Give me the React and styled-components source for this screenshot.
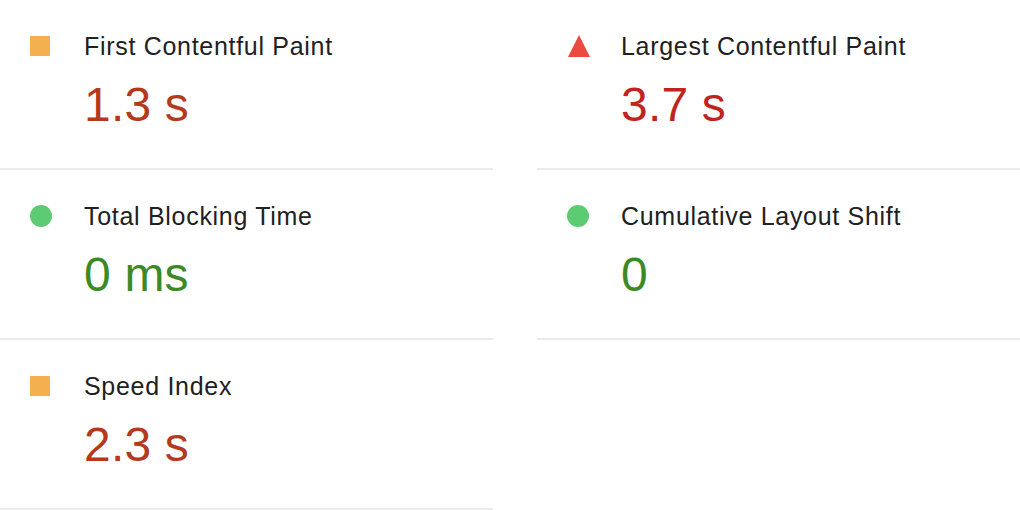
import React from 'react';
import styled, { createGlobalStyle } from 'styled-components';

const GlobalStyle = createGlobalStyle`
  html, body {
    margin: 0;
    padding: 0;
    background: #fff;
  }
  body {
    font-family: "Liberation Sans", Arial, Helvetica, sans-serif;
    color: #212121;
  }
`;

const colors = {
  average: { icon: '#f4b04f', text: '#b5391c' },
  fail: { icon: '#eb4a41', text: '#c0241f' },
  pass: { icon: '#5ccb72', text: '#3b8a25' }
};

const MetricGrid = styled.div`
  display: grid;
  grid-template-columns: 493px 483px;
  column-gap: 44px;
  align-items: start;
  width: 1020px;
`;

const Metric = styled.div`
  box-sizing: border-box;
  height: 170px;
  padding: 31px 0 0 30px;
  border-bottom: 2px solid #ebebeb;
`;

const Header = styled.div`
  display: flex;
  align-items: center;
  height: 30px;
`;

const IconSlot = styled.div`
  width: 24px;
  margin-right: 30px;
  display: flex;
  align-items: center;
  justify-content: flex-start;
`;

const Square = styled.span`
  display: block;
  width: 20px;
  height: 20px;
  background: ${colors.average.icon};
`;

const Circle = styled.span`
  display: block;
  width: 22px;
  height: 22px;
  border-radius: 50%;
  background: ${colors.pass.icon};
`;

const Triangle = styled.span`
  display: block;
  width: 0;
  height: 0;
  margin-left: 1px;
  border-left: 11px solid transparent;
  border-right: 11px solid transparent;
  border-bottom: 22px solid ${colors.fail.icon};
`;

const Label = styled.div`
  font-size: 25px;
  line-height: 30px;
  letter-spacing: 0.7px;
  color: #212121;
`;

const Value = styled.div`
  margin: 14px 0 0 54px;
  font-size: 48px;
  line-height: 60px;
  letter-spacing: 0.2px;
  color: ${p => colors[p.$rating].text};
`;

const icons = {
  average: <Square />,
  fail: <Triangle />,
  pass: <Circle />
};

const metrics = [
  { label: 'First Contentful Paint', value: '1.3 s', rating: 'average' },
  { label: 'Largest Contentful Paint', value: '3.7 s', rating: 'fail' },
  { label: 'Total Blocking Time', value: '0 ms', rating: 'pass' },
  { label: 'Cumulative Layout Shift', value: '0', rating: 'pass' },
  { label: 'Speed Index', value: '2.3 s', rating: 'average' }
];

export default function App() {
  return (
    <>
      <GlobalStyle />
      <MetricGrid>
        {metrics.map(m => (
          <Metric key={m.label}>
            <Header>
              <IconSlot>{icons[m.rating]}</IconSlot>
              <Label>{m.label}</Label>
            </Header>
            <Value $rating={m.rating}>{m.value}</Value>
          </Metric>
        ))}
      </MetricGrid>
    </>
  );
}
